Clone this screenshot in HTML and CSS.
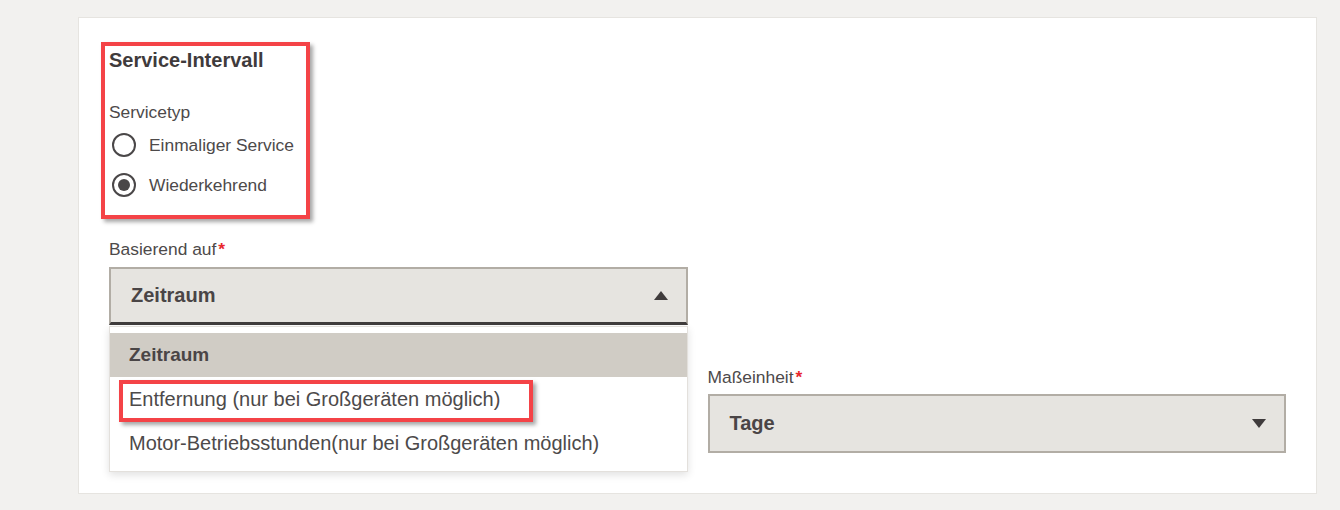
FILE: index.html
```html
<!DOCTYPE html>
<html lang="de">
<head>
<meta charset="utf-8">
<title>Service-Intervall</title>
<link rel="stylesheet" href="styles.css">
</head>
<body>
<div class="page">
  <section class="card">
    <div class="service-group">
      <h3 class="section-title">Service-Intervall</h3>
      <div class="field-label type-label">Servicetyp</div>
      <label class="radio-row">
        <span class="radio"></span>
        <span class="radio-text">Einmaliger Service</span>
      </label>
      <label class="radio-row">
        <span class="radio checked"></span>
        <span class="radio-text">Wiederkehrend</span>
      </label>
    </div>

    <div class="form-grid">
      <div class="field">
        <div class="field-label">Basierend auf<span class="req">*</span></div>
        <div class="select-wrap">
          <div class="select open">
            <span class="select-value">Zeitraum</span>
            <span class="arrow up"></span>
          </div>
          <ul class="dropdown">
            <li class="option active">Zeitraum</li>
            <li class="option">Entfernung (nur bei Großgeräten möglich)</li>
            <li class="option">Motor-Betriebsstunden(nur bei Großgeräten möglich)</li>
          </ul>
        </div>
      </div>
      <div class="field empty"></div>
      <div class="field">
        <div class="field-label">Intervall<span class="req">*</span></div>
        <div class="select">
          <span class="select-value"></span>
        </div>
      </div>
      <div class="field">
        <div class="field-label">Maßeinheit<span class="req">*</span></div>
        <div class="select tall">
          <span class="select-value">Tage</span>
          <span class="arrow down"></span>
        </div>
      </div>
    </div>

    <div class="annotation box-group"></div>
    <div class="annotation box-option"></div>
  </section>
</div>
</body>
</html>
```

FILE: styles.css
```css
* { box-sizing: border-box; }

html, body {
  margin: 0;
  padding: 0;
  background: #f2f1ef;
  font-family: "Liberation Sans", Arial, sans-serif;
  color: #4a4748;
}

.page {
  padding: 17px 23px 0 78px;
}

.card {
  position: relative;
  background: #ffffff;
  border: 1px solid #e6e4e0;
  box-shadow: 0 2px 0 #e1dfdb;
  padding: 30px 30px 40px 30px;
  height: 477px;
}

.section-title {
  margin: 0;
  font-size: 20px;
  line-height: 24px;
  font-weight: bold;
  color: #3f3b3c;
}

.field-label {
  font-size: 17.4px;
  line-height: 20px;
  color: #4d4a4a;
}

.type-label {
  margin-top: 30px;
  margin-bottom: 3px;
}

.radio-row {
  display: flex;
  align-items: center;
  height: 40px;
  gap: 13px;
  padding-left: 3px;
}

.radio {
  width: 24px;
  height: 24px;
  border: 2px solid #4a4748;
  border-radius: 50%;
  background: #fff;
  display: flex;
  align-items: center;
  justify-content: center;
}

.radio.checked::after {
  content: "";
  width: 12px;
  height: 12px;
  border-radius: 50%;
  background: #4a4748;
}

.radio-text {
  font-size: 17.4px;
  color: #4d4a4a;
}

.form-grid {
  margin-top: 34px;
  display: grid;
  grid-template-columns: 1fr 1fr;
  column-gap: 20px;
  row-gap: 42px;
}

.field .field-label {
  margin-bottom: 8px;
}

.req {
  color: #e8282d;
  font-weight: bold;
  margin-left: 2px;
}

.select-wrap {
  position: relative;
}

.select {
  height: 58px;
  background: #e6e4e0;
  border: 2px solid #b2ada5;
  display: flex;
  align-items: center;
  justify-content: space-between;
  padding: 0 18px 0 20px;
}

.select.tall {
  height: 59px;
  margin-top: -1px;
}

.select.open {
  border-bottom: 3px solid #403d3d;
}

.select-value {
  font-size: 20px;
  font-weight: bold;
  color: #4a4546;
}

.arrow {
  width: 0;
  height: 0;
  border-left: 7.5px solid transparent;
  border-right: 7.5px solid transparent;
}

.arrow.up {
  border-bottom: 9px solid #3f3b3c;
}

.arrow.down {
  border-top: 9px solid #3f3b3c;
}

.dropdown {
  position: absolute;
  left: 0;
  right: 0;
  top: calc(100% + 1px);
  margin: 0;
  padding: 6px 0;
  list-style: none;
  background: #fff;
  border: 1px solid #e3e0dc;
  box-shadow: 0 3px 8px rgba(0, 0, 0, 0.12);
  z-index: 5;
}

.option {
  height: 44px;
  display: flex;
  align-items: center;
  padding-left: 19px;
  font-size: 20px;
  color: #4d4a4a;
}

.option.active {
  background: #d0ccc5;
  font-weight: bold;
  font-size: 19px;
  color: #4a4546;
}

.annotation {
  position: absolute;
  border: 4px solid #f44347;
  box-shadow: 3px 3px 4px rgba(0, 0, 0, 0.35);
  z-index: 10;
  pointer-events: none;
}

.box-group {
  left: 22px;
  top: 24px;
  width: 209px;
  height: 177px;
}

.box-option {
  left: 40px;
  top: 362px;
  width: 414px;
  height: 42px;
}
```
